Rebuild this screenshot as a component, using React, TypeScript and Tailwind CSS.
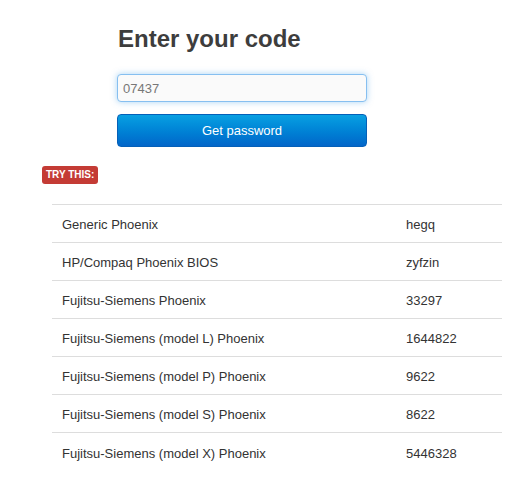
const rows = [
  ["Generic Phoenix", "hegq"],
  ["HP/Compaq Phoenix BIOS", "zyfzin"],
  ["Fujitsu-Siemens Phoenix", "33297"],
  ["Fujitsu-Siemens (model L) Phoenix", "1644822"],
  ["Fujitsu-Siemens (model P) Phoenix", "9622"],
  ["Fujitsu-Siemens (model S) Phoenix", "8622"],
  ["Fujitsu-Siemens (model X) Phoenix", "5446328"],
];

export default function App() {
  return (
    <div
      className="min-h-[480px] bg-white text-[#333] text-[13px]"
      style={{ fontFamily: "'Liberation Sans', Arial, sans-serif" }}
    >
      <div className="pl-[117px] pt-[24px]">
        <h1 className="text-[24px] font-bold leading-[30px] text-[#3d3d3d] pl-px">Enter your code</h1>
        <input
          defaultValue="07437"
          className="mt-[20px] block w-[250px] h-[28px] px-[5px] rounded-[4px] border border-[#86bff0] bg-[#fafafa] text-[13px] text-[#777] outline-none shadow-[0_0_6px_rgba(82,168,236,0.5)]"
        />
        <button className="mt-[12px] block w-[250px] h-[33px] rounded-[4px] border border-[#0560b8] bg-gradient-to-b from-[#0aa0e2] to-[#0366c9] text-white text-[13px]">
          Get password
        </button>
      </div>
      <div className="pl-[42px] pt-[17px]">
        <span className="inline-block rounded-[3px] bg-[#c43b35] px-[4px] h-[18px] leading-[18px] text-[10px] font-bold text-white uppercase">
          Try this:
        </span>
      </div>
      <table className="ml-[52px] mt-[20px] w-[450px] border-collapse">
        <tbody>
          {rows.map(([name, pw]) => (
            <tr key={name} className="border-t border-[#dddddd]">
              <td className="h-[38px] pl-[10px] pt-[3px] align-middle">{name}</td>
              <td className="h-[38px] w-[106px] pl-[10px] pt-[3px] align-middle">{pw}</td>
            </tr>
          ))}
        </tbody>
      </table>
    </div>
  );
}
